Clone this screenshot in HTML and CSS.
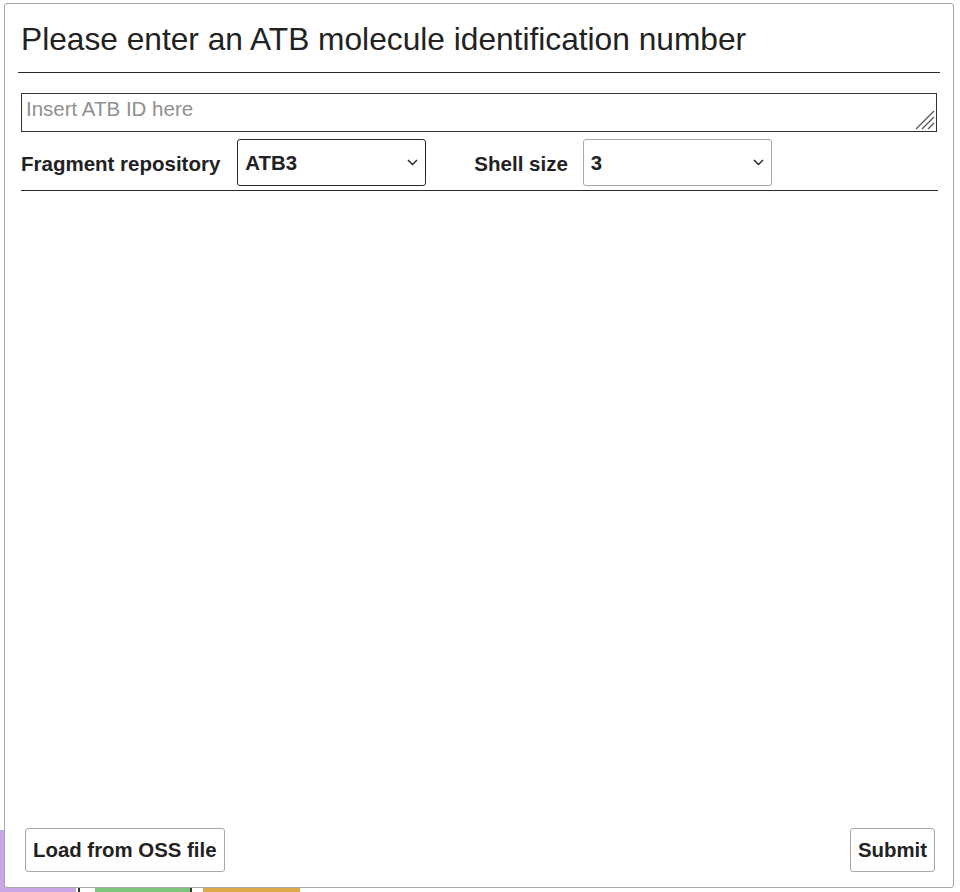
FILE: index.html
```html
<!DOCTYPE html>
<html>
<head>
<meta charset="utf-8">
<link rel="stylesheet" href="styles.css">
</head>
<body>
<div class="backdrop">
  <span class="bd-purple"></span>
  <span class="bd-mark bd-mark1"></span>
  <span class="bd-green"></span>
  <span class="bd-mark bd-mark2"></span>
  <span class="bd-orange"></span>
</div>
<div class="dialog">
  <div class="header">
    <h1 class="title">Please enter an ATB molecule identification number</h1>
  </div>
  <div class="body">
    <div class="input-wrap">
      <textarea class="id-input" placeholder="Insert ATB ID here"></textarea>
      <svg class="grip" width="20" height="20" viewBox="0 0 20 20"><path d="M1 19 L19 1 M7 19 L19 7 M13 19 L19 13" fill="none" stroke="#555" stroke-width="1.2"/></svg>
    </div>
    <div class="options">
      <label class="opt-label">Fragment repository</label>
      <div class="select-wrap select-focused">
        <select class="select"><option>ATB3</option></select>
        <svg class="chev" width="11" height="7" viewBox="0 0 11 7"><path d="M1 1 L5.5 5.5 L10 1" fill="none" stroke="#222" stroke-width="1.4"/></svg>
      </div>
      <label class="opt-label opt-label-2">Shell size</label>
      <div class="select-wrap">
        <select class="select"><option>3</option></select>
        <svg class="chev" width="11" height="7" viewBox="0 0 11 7"><path d="M1 1 L5.5 5.5 L10 1" fill="none" stroke="#222" stroke-width="1.4"/></svg>
      </div>
    </div>
  </div>
  <div class="footer">
    <button class="btn">Load from OSS file</button>
    <button class="btn">Submit</button>
  </div>
</div>
</body>
</html>
```
FILE: styles.css
```css
html, body {
  margin: 0;
  padding: 0;
  background: #ffffff;
  font-family: "Liberation Sans", Arial, sans-serif;
  color: #222;
}
body {
  position: relative;
  width: 960px;
  height: 892px;
  overflow: hidden;
}
.backdrop {
  position: absolute;
  left: 0;
  top: 0;
  width: 960px;
  height: 892px;
}
.backdrop span {
  position: absolute;
  display: block;
}
.bd-purple { left: 0; top: 830px; width: 76px; height: 62px; background: #c9a6e4; }
.bd-mark { width: 2px; height: 10px; background: #333; top: 882px; }
.bd-mark1 { left: 78px; }
.bd-green { left: 95px; top: 884px; width: 95px; height: 8px; background: #7ec47a; }
.bd-mark2 { left: 190px; }
.bd-orange { left: 203px; top: 884px; width: 97px; height: 8px; background: #dcaa48; }

.dialog {
  position: relative;
  margin: 3px 0 0 4px;
  width: 948px;
  height: 883px;
  border: 1px solid #a8a8a8;
  border-radius: 3px;
  background: #fff;
  display: flex;
  flex-direction: column;
}
.header {
  padding: 17px 13px 0 13px;
}
.title {
  margin: 0 0 0 3px;
  font-size: 31.7px;
  font-weight: normal;
  line-height: 36px;
  color: #222;
  padding-bottom: 15px;
  white-space: nowrap;
}
.header::after {
  content: "";
  display: block;
  height: 1px;
  background: #2a2a2a;
}
.body {
  padding: 20px 15px 0 16px;
  flex: 1;
}
.input-wrap {
  position: relative;
  width: 916px;
  height: 39px;
}
.id-input {
  display: block;
  width: 100%;
  height: 100%;
  box-sizing: border-box;
  border: 1px solid #333;
  border-radius: 0;
  padding: 3px 4px;
  font-family: "Liberation Sans", Arial, sans-serif;
  font-size: 20.5px;
  line-height: 24px;
  color: #222;
  resize: none;
  margin: 0;
  outline: none;
}
.id-input::placeholder {
  color: #8f8f8f;
}
.grip {
  position: absolute;
  right: 2px;
  bottom: 2px;
  pointer-events: none;
}
.options {
  display: flex;
  align-items: center;
  margin-top: 7px;
  padding-bottom: 4px;
  border-bottom: 1px solid #2a2a2a;
  width: 917px;
}
.opt-label {
  font-size: 20.5px;
  font-weight: bold;
  color: #222;
  margin-right: 17px;
  padding-top: 2px;
  white-space: nowrap;
}
.opt-label-2 {
  margin-left: 48px;
  margin-right: 15px;
}
.select-wrap {
  position: relative;
  width: 189px;
  height: 47px;
}
.select {
  -webkit-appearance: none;
  appearance: none;
  width: 100%;
  height: 100%;
  box-sizing: border-box;
  border: 1px solid #a8a8a8;
  border-radius: 3px;
  background: #fff;
  font-family: "Liberation Sans", Arial, sans-serif;
  font-size: 20.4px;
  font-weight: bold;
  color: #222;
  padding: 0 7px;
  margin: 0;
  outline: none;
}
.select-focused .select {
  border-color: #2a2a2a;
}
.chev {
  position: absolute;
  right: 8px;
  top: 20px;
  pointer-events: none;
}
.footer {
  display: flex;
  justify-content: space-between;
  padding: 0 18px 15px 20px;
}
.btn {
  height: 44px;
  box-sizing: border-box;
  border: 1px solid #a8a8a8;
  border-radius: 3px;
  background: #fff;
  font-family: "Liberation Sans", Arial, sans-serif;
  font-size: 20.4px;
  font-weight: bold;
  color: #222;
  padding: 0 7px;
  margin: 0;
}
```
